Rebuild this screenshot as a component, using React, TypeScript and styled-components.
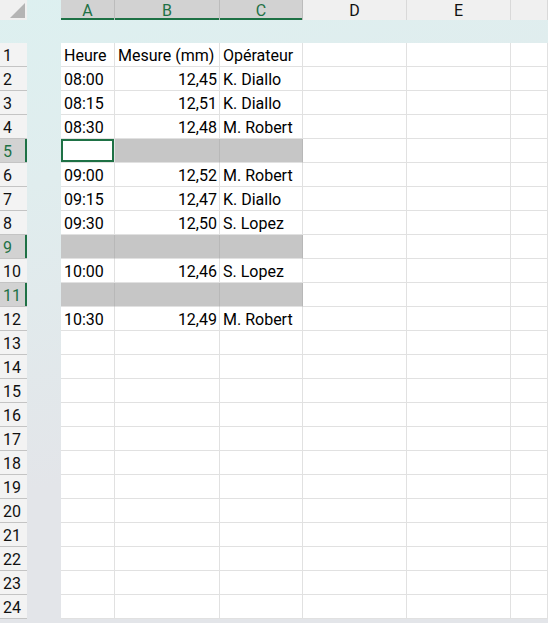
import React from "react";
import styled, { createGlobalStyle } from "styled-components";

const GlobalStyle = createGlobalStyle`
  html, body {
    margin: 0;
    padding: 0;
  }
  body {
    font-family: Roboto, "Liberation Sans", sans-serif;
    background: #e3e5e9;
  }
`;

const COLS = "27px 34px 54px 105px 83px 104px 104px 1fr";
const GREEN = "#1e7145";

const Sheet = styled.div`
  width: 548px;
  height: 623px;
  overflow: hidden;
  display: flex;
  flex-direction: column;
  background: linear-gradient(165deg, #ddf0f0 0%, #e0edee 25%, #e3e5e9 65%);
`;

const HeaderRow = styled.div`
  display: grid;
  grid-template-columns: ${COLS};
  height: 19px;
`;

const Corner = styled.div`
  position: relative;
  background: #f0f0f0;
  overflow: hidden;

  &::after {
    content: "";
    position: absolute;
    right: 2px;
    bottom: 2px;
    width: 0;
    height: 0;
    border-left: 15px solid transparent;
    border-bottom: 15px solid #b4b4b4;
  }
`;

const Gap = styled.div``;

const ColHead = styled.div<{ $sel?: boolean }>`
  display: flex;
  align-items: center;
  justify-content: center;
  padding-top: 1px;
  font-size: 16px;
  background: ${(p) => (p.$sel ? "#d2d2d2" : "#f0f0f0")};
  color: ${(p) => (p.$sel ? GREEN : "#111")};
  border-right: 1px solid ${(p) => (p.$sel ? "#bcbcbc" : "#d9d9d9")};
  box-shadow: ${(p) => (p.$sel ? `inset 0 -2px 0 ${GREEN}` : "none")};
`;

const Band = styled.div`
  height: 24px;
`;

const Row = styled.div`
  display: grid;
  grid-template-columns: ${COLS};
  height: 24px;
`;

const RowHead = styled.div<{ $sel?: boolean }>`
  display: flex;
  align-items: center;
  padding: 2px 0 0 3px;
  font-size: 16px;
  background: ${(p) => (p.$sel ? "#d2d2d2" : "#f3f3f3")};
  color: ${(p) => (p.$sel ? GREEN : "#111")};
  border-bottom: 1px solid #c4c4c4;
  box-shadow: ${(p) => (p.$sel ? `inset -2px 0 0 ${GREEN}` : "none")};
`;

const Cell = styled.div<{ $num?: boolean; $fill?: boolean; $active?: boolean }>`
  display: flex;
  align-items: center;
  justify-content: ${(p) => (p.$num ? "flex-end" : "flex-start")};
  padding: 2px 2px 0 3px;
  font-size: 16px;
  color: #000;
  white-space: nowrap;
  background: ${(p) => (p.$fill ? "#c6c6c6" : "#fff")};
  border-right: 1px solid ${(p) => (p.$fill ? "#b8b8b8" : "#e1e1e1")};
  border-bottom: 1px solid #e1e1e1;
  box-shadow: ${(p) => (p.$active ? `inset 0 0 0 2px ${GREEN}` : "none")};
`;

type Rec = { h: string; m: string; op: string } | null;

const data: Rec[] = [
  { h: "Heure", m: "Mesure (mm)", op: "Opérateur" },
  { h: "08:00", m: "12,45", op: "K. Diallo" },
  { h: "08:15", m: "12,51", op: "K. Diallo" },
  { h: "08:30", m: "12,48", op: "M. Robert" },
  null,
  { h: "09:00", m: "12,52", op: "M. Robert" },
  { h: "09:15", m: "12,47", op: "K. Diallo" },
  { h: "09:30", m: "12,50", op: "S. Lopez" },
  null,
  { h: "10:00", m: "12,46", op: "S. Lopez" },
  null,
  { h: "10:30", m: "12,49", op: "M. Robert" },
];

const TOTAL_ROWS = 24;
const ACTIVE_ROW = 5;

export default function App() {
  const rows = Array.from({ length: TOTAL_ROWS }, (_, i) => i + 1);
  return (
    <Sheet>
      <GlobalStyle />
      <HeaderRow>
        <Corner />
        <Gap />
        <ColHead $sel>A</ColHead>
        <ColHead $sel>B</ColHead>
        <ColHead $sel>C</ColHead>
        <ColHead>D</ColHead>
        <ColHead>E</ColHead>
        <ColHead />
      </HeaderRow>
      <Band />
      {rows.map((n) => {
        const inData = n <= data.length;
        const rec = inData ? data[n - 1] : undefined;
        const sel = inData && rec === null;
        const first = n === 1;
        return (
          <Row key={n}>
            <RowHead $sel={sel}>{n}</RowHead>
            <Gap />
            <Cell $fill={sel && n !== ACTIVE_ROW} $active={n === ACTIVE_ROW}>
              {rec?.h}
            </Cell>
            <Cell $fill={sel} $num={!first}>
              {rec?.m}
            </Cell>
            <Cell $fill={sel}>{rec?.op}</Cell>
            <Cell />
            <Cell />
            <Cell />
          </Row>
        );
      })}
    </Sheet>
  );
}
